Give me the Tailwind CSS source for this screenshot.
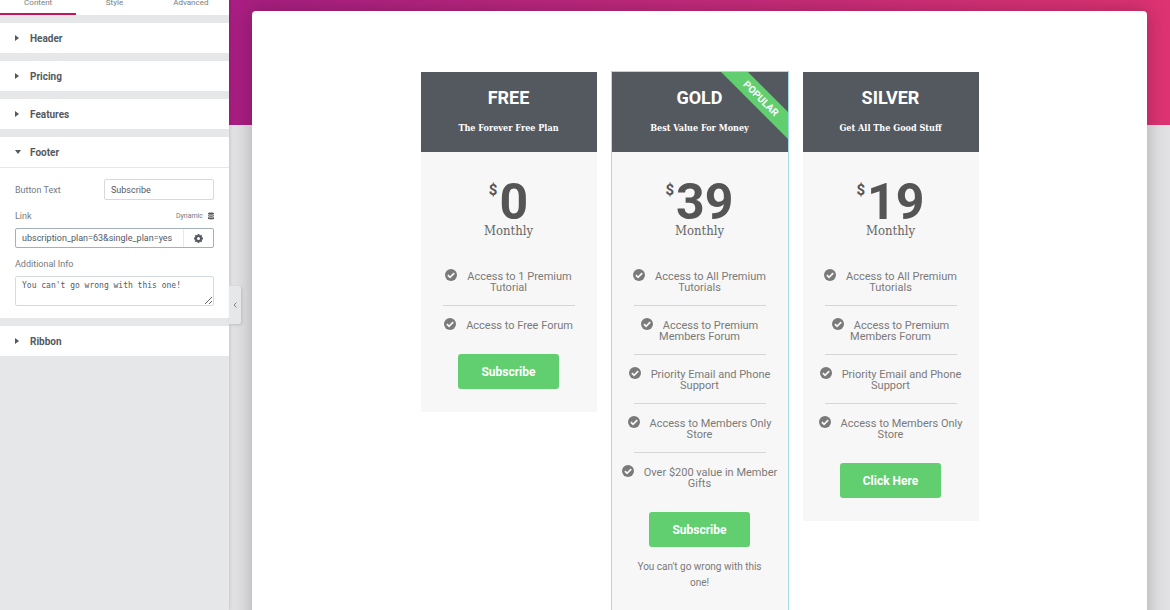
<!DOCTYPE html>
<html lang="en">
<head>
    <meta charset="UTF-8">
    <meta name="viewport" content="width=device-width, initial-scale=1.0">
    <title>Pricing Table Editor</title>
    <script src="https://cdn.jsdelivr.net/npm/@tailwindcss/browser@4"></script>
</head>
<body class="font-['Roboto',sans-serif] text-[#54595f]">
    <!-- shared icons -->
    <svg class="hidden">
        <symbol id="check" viewBox="0 0 24 24">
            <circle cx="12" cy="12" r="12" fill="currentColor"/>
            <path d="M5.8 12.2l4.4 4.4 8.2-8.2" fill="none" stroke="#f7f7f7" stroke-width="3.6"/>
        </symbol>
        <symbol id="caret-right" viewBox="0 0 4 6">
            <path d="M0 0l4 3-4 3z" fill="currentColor"/>
        </symbol>
        <symbol id="caret-down" viewBox="0 0 6 4">
            <path d="M0 0h6l-3 4z" fill="currentColor"/>
        </symbol>
    </svg>

    <div class="flex h-screen overflow-hidden">
        <!-- editor panel -->
        <aside class="relative z-10 w-[229px] shrink-0 bg-[#e6e7e9] shadow-[0_0_4px_rgba(0,0,0,0.2)]">
            <nav class="flex h-[15px] items-end overflow-hidden bg-white text-center text-[8px] leading-[10px] text-[#7a7d80]">
                <a href="#" class="flex-1 border-b-2 border-[#c2185b] pb-[5px]">Content</a>
                <a href="#" class="flex-1 pb-[7px]">Style</a>
                <a href="#" class="flex-1 pb-[7px]">Advanced</a>
            </nav>

            <div class="flex flex-col gap-2 pt-2">
                <button class="flex h-[30px] items-center bg-white pl-[15px] text-left text-[10px] font-bold">
                    <svg class="mr-[11px] h-[6px] w-[4px]"><use href="#caret-right"/></svg>Header
                </button>
                <button class="flex h-[30px] items-center bg-white pl-[15px] text-left text-[10px] font-bold">
                    <svg class="mr-[11px] h-[6px] w-[4px]"><use href="#caret-right"/></svg>Pricing
                </button>
                <button class="flex h-[30px] items-center bg-white pl-[15px] text-left text-[10px] font-bold">
                    <svg class="mr-[11px] h-[6px] w-[4px]"><use href="#caret-right"/></svg>Features
                </button>

                <section class="bg-white">
                    <button class="flex h-[31px] w-full items-center border-b border-[#e6e9ec] pl-[15px] text-left text-[10px] font-bold">
                        <svg class="mr-[9px] h-[4px] w-[6px]"><use href="#caret-down"/></svg>Footer
                    </button>
                    <form class="px-[15px] pt-[11px] pb-3 text-[9px] leading-[10px] text-[#76797d]">
                        <div class="flex items-center justify-between">
                            <label for="button-text">Button Text</label>
                            <input id="button-text" type="text" value="Subscribe" class="h-[21px] w-[110px] rounded-[2px] border border-[#d5dadf] px-[6px] text-[9px] text-[#54595f]">
                        </div>
                        <div class="mt-[11px] flex items-center justify-between">
                            <label for="link">Link</label>
                            <a href="#" class="flex items-center gap-[5px] text-[7px]">
                                Dynamic
                                <svg class="h-[8px] w-[6px]" viewBox="0 0 6 8" fill="#54595f">
                                    <path d="M0 1.2C0 .2 6 .2 6 1.2v.8C6 3 0 3 0 2zM0 3c1 .8 5 .8 6 0v1c0 1-6 1-6 0zM0 4.9c1 .8 5 .8 6 0v1.6c0 1.2-6 1.2-6 0z"/>
                                </svg>
                            </a>
                        </div>
                        <div class="mt-[7px] flex h-5 rounded-[2px] border border-[#a4afb7]">
                            <input id="link" type="text" value="ubscription_plan=63&amp;single_plan=yes" class="min-w-0 flex-1 pl-[6px] text-[9px] text-[#54595f]">
                            <button type="button" aria-label="Link options" class="flex w-[30px] items-center justify-center border-l border-[#e6e9ec]">
                                <svg class="h-[9px] w-[9px]" viewBox="0 0 18 18" fill="none" stroke="#54595f">
                                    <circle cx="9" cy="9" r="5" stroke-width="4"/>
                                    <path d="M9 0v3M9 15v3M0 9h3M15 9h3M2.6 2.6l2.2 2.2M13.2 13.2l2.2 2.2M2.6 15.4l2.2-2.2M13.2 4.8l2.2-2.2" stroke-width="3.6"/>
                                </svg>
                            </button>
                        </div>
                        <label for="info" class="mt-[11px] block">Additional Info</label>
                        <textarea id="info" class="mt-[7px] block h-[30px] w-full resize-y overflow-hidden rounded-[2px] border border-[#d5dadf] px-[6px] py-[4px] font-['DejaVu_Sans_Mono',monospace] text-[8px] leading-[10px] text-[#54595f]">You can't go wrong with this one!</textarea>
                    </form>
                </section>

                <button class="flex h-[30px] items-center bg-white pl-[15px] text-left text-[10px] font-bold">
                    <svg class="mr-[11px] h-[6px] w-[4px]"><use href="#caret-right"/></svg>Ribbon
                </button>
            </div>

            <!-- collapse handle hangs over the preview -->
            <button aria-label="Collapse panel" class="absolute top-[286px] left-full flex h-[38px] w-3 items-center justify-center rounded-r-[2px] bg-[#e6e7e9] shadow-[1px_1px_3px_rgba(0,0,0,0.15)]">
                <svg class="h-[6px] w-[4px]" viewBox="0 0 4 6" fill="none" stroke="#7d858c"><path d="M3.500 .5L1 3l2.500 2.500"/></svg>
            </button>
        </aside>

        <!-- preview -->
        <main class="relative flex-1 overflow-hidden bg-[#e2e2e4] px-[23px] pt-[11px]">
            <div class="absolute inset-x-0 top-0 h-[125px] bg-linear-to-r from-[#a81e82] to-[#de3372]"></div>
            <div class="relative min-h-screen rounded-[4px] bg-white pt-[61px] pb-10 shadow-[0_0_20px_rgba(0,0,0,0.25)]">
                <div class="mx-auto grid max-w-[558px] grid-cols-3 items-start gap-[15px] text-center">

                    <article class="bg-[#f7f7f7] pb-[23px]">
                        <header class="bg-[#54595f] pt-[15px] pb-[17px] text-white">
                            <h3 class="text-[18px] leading-[22px] font-bold">FREE</h3>
                            <p class="mt-3 font-['Roboto_Slab','DejaVu_Serif_Condensed','DejaVu_Serif',serif] text-[9px] leading-[14px] font-bold">The Forever Free Plan</p>
                        </header>
                        <div class="flex justify-center gap-[2px] pt-7 font-bold text-[#555]">
                            <span class="pt-[3px] text-[15px] leading-[15px]">$</span>
                            <span class="pt-px text-[50px] leading-[43px]">0</span>
                        </div>
                        <p class="font-['Roboto_Slab','DejaVu_Serif_Condensed','DejaVu_Serif',serif] text-[13px] leading-[14px] text-[#666]">Monthly</p>
                        <ul class="px-2 pt-[33px] text-[11px] leading-[11px] text-[#7a7a7a]">
                            <li class="after:mx-auto after:mt-3 after:mb-[14px] after:block after:h-px after:w-[132px] after:bg-[#d5d5d5]"><svg class="mr-[10px] -mt-1 inline h-[12px] w-[12px]"><use href="#check"/></svg>Access to 1 Premium Tutorial</li>
                            <li><svg class="mr-[10px] -mt-1 inline h-[12px] w-[12px]"><use href="#check"/></svg>Access to Free Forum</li>
                        </ul>
                        <button class="mt-[23px] h-[35px] rounded-[3px] bg-[#61ce70] px-[23px] text-[12px] font-bold text-white">Subscribe</button>
                    </article>

                    <article class="relative bg-[#f7f7f7] pb-[23px] outline outline-[#a5dcea]">
                        <div class="absolute top-0 right-0 h-20 w-20 overflow-hidden">
                            <div class="absolute top-[17px] -right-[33px] h-[19px] w-[120px] rotate-45 bg-[#61ce70] text-[10px] leading-[19px] font-bold text-white">POPULAR</div>
                        </div>
                        <header class="bg-[#54595f] pt-[15px] pb-[17px] text-white">
                            <h3 class="text-[18px] leading-[22px] font-bold">GOLD</h3>
                            <p class="mt-3 font-['Roboto_Slab','DejaVu_Serif_Condensed','DejaVu_Serif',serif] text-[9px] leading-[14px] font-bold">Best Value For Money</p>
                        </header>
                        <div class="flex justify-center gap-[2px] pt-7 font-bold text-[#555]">
                            <span class="pt-[3px] text-[15px] leading-[15px]">$</span>
                            <span class="pt-px text-[50px] leading-[43px]">39</span>
                        </div>
                        <p class="font-['Roboto_Slab','DejaVu_Serif_Condensed','DejaVu_Serif',serif] text-[13px] leading-[14px] text-[#666]">Monthly</p>
                        <ul class="px-2 pt-[33px] text-[11px] leading-[11px] text-[#7a7a7a]">
                            <li class="after:mx-auto after:mt-3 after:mb-[14px] after:block after:h-px after:w-[132px] after:bg-[#d5d5d5]"><svg class="mr-[10px] -mt-1 inline h-[12px] w-[12px]"><use href="#check"/></svg>Access to All Premium Tutorials</li>
                            <li class="after:mx-auto after:mt-3 after:mb-[14px] after:block after:h-px after:w-[132px] after:bg-[#d5d5d5]"><svg class="mr-[10px] -mt-1 inline h-[12px] w-[12px]"><use href="#check"/></svg>Access to Premium Members Forum</li>
                            <li class="after:mx-auto after:mt-3 after:mb-[14px] after:block after:h-px after:w-[132px] after:bg-[#d5d5d5]"><svg class="mr-[10px] -mt-1 inline h-[12px] w-[12px]"><use href="#check"/></svg>Priority Email and Phone Support</li>
                            <li class="after:mx-auto after:mt-3 after:mb-[14px] after:block after:h-px after:w-[132px] after:bg-[#d5d5d5]"><svg class="mr-[10px] -mt-1 inline h-[12px] w-[12px]"><use href="#check"/></svg>Access to Members Only Store</li>
                            <li><svg class="mr-[10px] -mt-1 inline h-[12px] w-[12px]"><use href="#check"/></svg>Over $200 value in Member Gifts</li>
                        </ul>
                        <button class="mt-[23px] h-[35px] rounded-[3px] bg-[#61ce70] px-[23px] text-[12px] font-bold text-white">Subscribe</button>
                        <p class="mt-3 px-6 text-[10px] leading-4 text-[#7a7a7a]">You can't go wrong with this one!</p>
                    </article>

                    <article class="bg-[#f7f7f7] pb-[23px]">
                        <header class="bg-[#54595f] pt-[15px] pb-[17px] text-white">
                            <h3 class="text-[18px] leading-[22px] font-bold">SILVER</h3>
                            <p class="mt-3 font-['Roboto_Slab','DejaVu_Serif_Condensed','DejaVu_Serif',serif] text-[9px] leading-[14px] font-bold">Get All The Good Stuff</p>
                        </header>
                        <div class="flex justify-center gap-[2px] pt-7 font-bold text-[#555]">
                            <span class="pt-[3px] text-[15px] leading-[15px]">$</span>
                            <span class="pt-px text-[50px] leading-[43px]">19</span>
                        </div>
                        <p class="font-['Roboto_Slab','DejaVu_Serif_Condensed','DejaVu_Serif',serif] text-[13px] leading-[14px] text-[#666]">Monthly</p>
                        <ul class="px-2 pt-[33px] text-[11px] leading-[11px] text-[#7a7a7a]">
                            <li class="after:mx-auto after:mt-3 after:mb-[14px] after:block after:h-px after:w-[132px] after:bg-[#d5d5d5]"><svg class="mr-[10px] -mt-1 inline h-[12px] w-[12px]"><use href="#check"/></svg>Access to All Premium Tutorials</li>
                            <li class="after:mx-auto after:mt-3 after:mb-[14px] after:block after:h-px after:w-[132px] after:bg-[#d5d5d5]"><svg class="mr-[10px] -mt-1 inline h-[12px] w-[12px]"><use href="#check"/></svg>Access to Premium Members Forum</li>
                            <li class="after:mx-auto after:mt-3 after:mb-[14px] after:block after:h-px after:w-[132px] after:bg-[#d5d5d5]"><svg class="mr-[10px] -mt-1 inline h-[12px] w-[12px]"><use href="#check"/></svg>Priority Email and Phone Support</li>
                            <li><svg class="mr-[10px] -mt-1 inline h-[12px] w-[12px]"><use href="#check"/></svg>Access to Members Only Store</li>
                        </ul>
                        <button class="mt-[23px] h-[35px] rounded-[3px] bg-[#61ce70] px-[23px] text-[12px] font-bold text-white">Click Here</button>
                    </article>

                </div>
            </div>
        </main>
    </div>
</body>
</html>
